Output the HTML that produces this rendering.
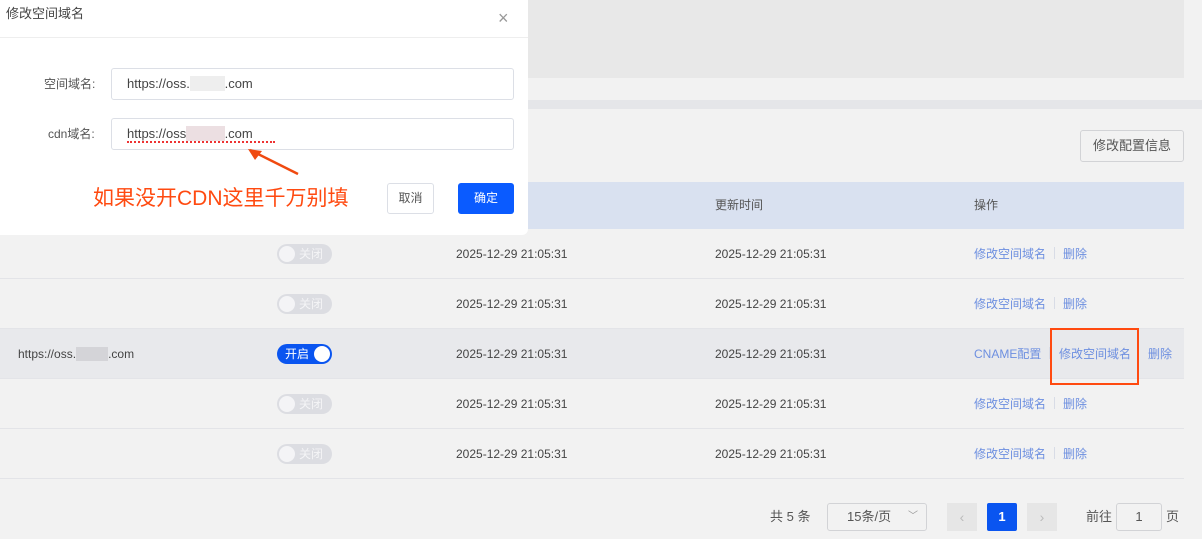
<!DOCTYPE html>
<html><head><meta charset="utf-8"><style>
*{box-sizing:border-box;margin:0;padding:0}
body{width:1202px;height:539px;background:#f2f2f2;font-family:"Liberation Sans","Noto Sans CJK SC",sans-serif;position:relative;overflow:hidden;color:#555;font-size:12px;line-height:14px}
.abs{position:absolute}
.row{position:absolute;left:0;width:1184px;height:50px;border-bottom:1px solid #e3e4e8}
.cell{position:absolute;top:18px;font-size:12px;line-height:14px;color:#444;white-space:nowrap}
.sw{position:absolute;left:277px;top:15px;width:55px;height:20px;border-radius:10px;background:#dcdde2}
.sw .k{position:absolute;left:2px;top:2px;width:16px;height:16px;border-radius:50%;background:#f4f4f6}
.sw span{position:absolute;left:22px;top:3px;font-size:12px;line-height:14px;color:#f4f4f6}
.lk{color:#6d8fe0}
.sep{display:inline-block;width:1px;height:12px;background:#d8dce6;margin:0 8px;vertical-align:-1px}
</style></head><body>
<div class="abs" style="left:528px;top:0;width:656px;height:78px;background:#e8e8e8"></div>
<div class="abs" style="left:0;top:100px;width:1202px;height:9px;background:#e5e6e9"></div>
<div class="abs" style="left:1080px;top:130px;width:104px;height:32px;border:1px solid #d2d3d6;border-radius:3px;font-size:13px;color:#555;text-align:center;line-height:30px">修改配置信息</div>
<div class="abs" style="left:0;top:182px;width:1184px;height:47px;background:#d9e1f0"></div>
<div class="cell" style="left:715px;top:198px;color:#555">更新时间</div>
<div class="cell" style="left:974px;top:198px;color:#555">操作</div>

<div class="row" style="top:229px"><div class="sw"><div class="k"></div><span>关闭</span></div><div class="cell" style="left:456px">2025-12-29 21:05:31</div><div class="cell" style="left:715px">2025-12-29 21:05:31</div><div class="cell lk" style="left:974px">修改空间域名<i class="sep"></i>删除</div></div>
<div class="row" style="top:279px"><div class="sw"><div class="k"></div><span>关闭</span></div><div class="cell" style="left:456px">2025-12-29 21:05:31</div><div class="cell" style="left:715px">2025-12-29 21:05:31</div><div class="cell lk" style="left:974px">修改空间域名<i class="sep"></i>删除</div></div>
<div class="row" style="top:329px;background:#e8e9ec"><div class="cell" style="left:18px">https://oss.<span style="background:#d4d4d8;color:#d4d4d8">kup.ai</span>.com</div><div class="sw" style="background:#0a55f0"><span style="left:8px;color:#fff">开启</span><div class="k" style="left:37px;background:#fff"></div></div><div class="cell" style="left:456px">2025-12-29 21:05:31</div><div class="cell" style="left:715px">2025-12-29 21:05:31</div><div class="cell lk" style="left:974px">CNAME配置<i class="sep"></i></div><div class="cell lk" style="left:1059px">修改空间域名</div><div class="cell lk" style="left:1148px">删除</div></div>
<div class="row" style="top:379px"><div class="sw"><div class="k"></div><span>关闭</span></div><div class="cell" style="left:456px">2025-12-29 21:05:31</div><div class="cell" style="left:715px">2025-12-29 21:05:31</div><div class="cell lk" style="left:974px">修改空间域名<i class="sep"></i>删除</div></div>
<div class="row" style="top:429px"><div class="sw"><div class="k"></div><span>关闭</span></div><div class="cell" style="left:456px">2025-12-29 21:05:31</div><div class="cell" style="left:715px">2025-12-29 21:05:31</div><div class="cell lk" style="left:974px">修改空间域名<i class="sep"></i>删除</div></div>
<div class="abs" style="left:1050px;top:328px;width:89px;height:57px;border:2px solid #ff4a10"></div>

<div class="abs" style="left:770px;top:510px;font-size:13px;color:#555">共 5 条</div>
<div class="abs" style="left:827px;top:503px;width:100px;height:28px;border:1px solid #d2d3d6;border-radius:3px;font-size:13px;line-height:26px;padding-left:19px;color:#555">15条/页<span style="position:absolute;right:8px;top:0;font-size:10px;color:#999">﹀</span></div>
<div class="abs" style="left:947px;top:503px;width:30px;height:28px;background:#e6e6e6;color:#bbb;text-align:center;line-height:28px;font-size:14px">‹</div>
<div class="abs" style="left:987px;top:503px;width:30px;height:28px;background:#0a55f0;color:#fff;text-align:center;line-height:28px;font-size:13px;font-weight:bold;border-radius:2px">1</div>
<div class="abs" style="left:1027px;top:503px;width:30px;height:28px;background:#e6e6e6;color:#bbb;text-align:center;line-height:28px;font-size:14px">›</div>
<div class="abs" style="left:1086px;top:510px;font-size:13px;color:#555">前往</div>
<div class="abs" style="left:1116px;top:503px;width:46px;height:28px;border:1px solid #d2d3d6;border-radius:3px;text-align:center;line-height:26px;font-size:13px;color:#555">1</div>
<div class="abs" style="left:1166px;top:510px;font-size:13px;color:#555">页</div>

<div class="abs" style="left:0;top:0;width:528px;height:235px;background:#fff;border-radius:0 0 6px 0">
 <div class="abs" style="left:6px;top:7px;font-size:13px;color:#444">修改空间域名</div>
 <div class="abs" style="left:498px;top:9px;font-size:18px;color:#999;line-height:18px">×</div>
 <div class="abs" style="left:0;top:37px;width:528px;height:1px;background:#eee"></div>
 <div class="abs" style="left:44px;top:77px;font-size:12px;color:#555">空间域名:</div>
 <div class="abs" style="left:111px;top:68px;width:403px;height:32px;border:1px solid #dcdfe6;border-radius:3px;font-size:13px;line-height:30px;padding-left:15px;color:#444">https://oss.<span style="background:#eee;color:#eee">kup.ai</span>.com</div>
 <div class="abs" style="left:48px;top:127px;font-size:12px;color:#555">cdn域名:</div>
 <div class="abs" style="left:111px;top:118px;width:403px;height:32px;border:1px solid #dcdfe6;border-radius:3px;font-size:13px;line-height:30px;padding-left:15px;color:#444">https://oss<span style="background:#ecdfe2;color:#ecdfe2">.kup.ai</span>.com<div class="abs" style="top:22px;width:148px;height:2px;border-bottom:2px dotted #e33;left:15px"></div></div>
 <svg class="abs" style="left:240px;top:140px" width="70" height="40"><line x1="58" y1="34" x2="10" y2="10" stroke="#f04a10" stroke-width="2.5"/><path d="M8 9 L22 11 L15 20 Z" fill="#f04a10"/></svg>
 <div class="abs" style="left:93px;top:186px;font-size:21px;line-height:26px;color:#ff4a10;white-space:nowrap">如果没开CDN这里千万别填</div>
 <div class="abs" style="left:387px;top:183px;width:47px;height:31px;border:1px solid #dcdfe6;border-radius:3px;text-align:center;line-height:29px;font-size:12px;color:#555">取消</div>
 <div class="abs" style="left:458px;top:183px;width:56px;height:31px;background:#0a5bff;border-radius:3px;text-align:center;line-height:31px;font-size:12px;color:#fff">确定</div>
</div>
</body></html>
